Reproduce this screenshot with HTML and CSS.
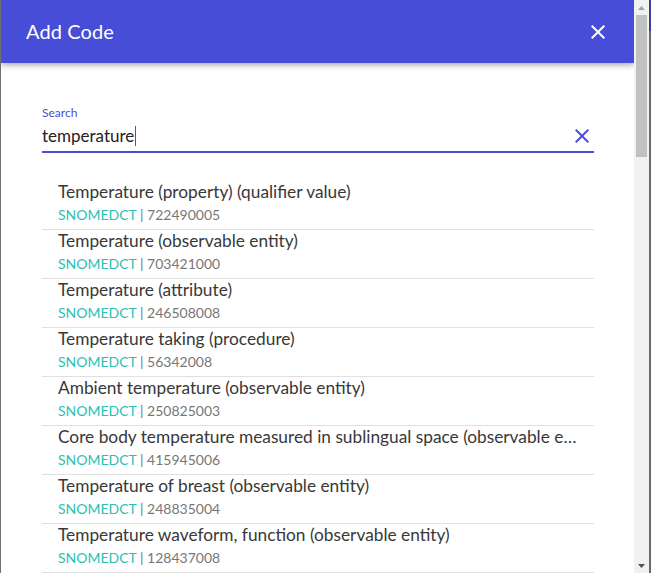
FILE: index.html
```html
<!DOCTYPE html>
<html>
<head>
<meta charset="utf-8">
<link rel="stylesheet" href="styles.css">
</head>
<body>
<div class="backdrop">
  <div class="dialog">
    <div class="dialog-main">
      <header class="dialog-header">
        <h1 class="dialog-title">Add Code</h1>
        <button class="icon-btn header-close" aria-label="Close">
          <svg width="24" height="24" viewBox="0 0 24 24"><path fill="currentColor" d="M19 6.41L17.59 5 12 10.590 6.41 5 5 6.41 10.59 12 5 17.59 6.41 19 12 13.41 17.59 19 19 17.59 13.41 12z"/></svg>
        </button>
      </header>
      <div class="dialog-body">
        <div class="field">
          <label class="field-label">Search</label>
          <div class="field-row">
            <span class="field-input">temperature<span class="caret"></span></span>
            <button class="icon-btn clear-btn" aria-label="Clear">
              <svg width="24" height="24" viewBox="0 0 24 24"><path fill="currentColor" d="M19 6.41L17.59 5 12 10.59 6.41 5 5 6.41 10.59 12 5 17.59 6.41 19 12 13.41 17.59 19 19 17.59 13.41 12z"/></svg>
            </button>
          </div>
        </div>
        <ul class="results">
          <li class="result"><div class="result-title">Temperature (property) (qualifier value)</div><div class="result-code"><span class="system">SNOMEDCT</span> | 722490005</div></li>
          <li class="result"><div class="result-title">Temperature (observable entity)</div><div class="result-code"><span class="system">SNOMEDCT</span> | 703421000</div></li>
          <li class="result"><div class="result-title">Temperature (attribute)</div><div class="result-code"><span class="system">SNOMEDCT</span> | 246508008</div></li>
          <li class="result"><div class="result-title">Temperature taking (procedure)</div><div class="result-code"><span class="system">SNOMEDCT</span> | 56342008</div></li>
          <li class="result"><div class="result-title">Ambient temperature (observable entity)</div><div class="result-code"><span class="system">SNOMEDCT</span> | 250825003</div></li>
          <li class="result"><div class="result-title">Core body temperature measured in sublingual space (observable entity)</div><div class="result-code"><span class="system">SNOMEDCT</span> | 415945006</div></li>
          <li class="result"><div class="result-title">Temperature of breast (observable entity)</div><div class="result-code"><span class="system">SNOMEDCT</span> | 248835004</div></li>
          <li class="result"><div class="result-title">Temperature waveform, function (observable entity)</div><div class="result-code"><span class="system">SNOMEDCT</span> | 128437008</div></li>
        </ul>
      </div>
    </div>
    <div class="scrollbar" aria-hidden="true">
      <div class="sb-button">
        <svg width="15" height="15" viewBox="0 0 15 15"><polygon points="4,10 11,10 7.5,6" fill="#a3a3a3"/></svg>
      </div>
      <div class="sb-track">
        <div class="sb-thumb"></div>
      </div>
      <div class="sb-button">
        <svg width="15" height="15" viewBox="0 0 15 15"><polygon points="4,6 11,6 7.5,10" fill="#505050"/></svg>
      </div>
    </div>
  </div>
</div>
</body>
</html>
```

FILE: styles.css
```css
* { box-sizing: border-box; }
html, body { margin: 0; padding: 0; }
body {
  font-family: Lato, "Liberation Sans", sans-serif;
  background: #6b6b6b;
  overflow: hidden;
}
.backdrop {
  height: 573px;
  padding: 0 2px 0 1px;
  background: linear-gradient(to bottom, #3a3e9a 0, #3a3e9a 31px, #6b6b6b 31px) right top / 2px 100% no-repeat, #707070;
}
.dialog {
  height: 573px;
  background: #ffffff;
  display: flex;
}
.dialog-main {
  flex: 1;
  min-width: 0;
  display: flex;
  flex-direction: column;
  overflow: hidden;
}
.dialog-header {
  position: relative;
  z-index: 1;
  flex: 0 0 63px;
  background: #474dd6;
  color: #ffffff;
  display: flex;
  align-items: center;
  justify-content: space-between;
  padding: 0 24px 2px 25px;
  box-shadow: 0 2px 6px rgba(0,0,0,0.35);
}
.dialog-title {
  margin: 0;
  font-size: 20px;
  font-weight: 400;
  letter-spacing: 0.1px;
}
.icon-btn {
  border: 0;
  background: transparent;
  padding: 0;
  width: 24px;
  height: 24px;
  display: flex;
  align-items: center;
  justify-content: center;
  cursor: pointer;
}
.header-close { color: #ffffff; margin-top: 2px; }
.dialog-body {
  padding: 43px 40px 0 41px;
}
.field {
  display: flex;
  flex-direction: column;
}
.field-label {
  font-size: 12px;
  line-height: 14px;
  color: #4a4fd6;
}
.field-row {
  margin-top: 4px;
  display: flex;
  align-items: center;
  justify-content: space-between;
  padding-bottom: 3px;
  border-bottom: 2px solid #474dd6;
}
.field-input {
  font-size: 17px;
  line-height: 24px;
  color: #222222;
  display: flex;
  align-items: center;
}
.caret {
  display: inline-block;
  width: 1px;
  height: 20px;
  background: #474dd6;
  margin-left: 1px;
}
.clear-btn { color: #474dd6; }
.results {
  list-style: none;
  margin: 28px 0 0;
  padding: 0;
}
.result {
  padding: 1px 16px 4px 16px;
  border-bottom: 1px solid #e0e0e0;
}
.result-title {
  font-size: 17.3px;
  line-height: 20px;
  color: #383838;
  white-space: nowrap;
  overflow: hidden;
  text-overflow: ellipsis;
}
.result-code {
  margin-top: 3px;
  font-size: 14px;
  line-height: 20px;
  color: #777777;
}
.system { color: #2bbfb3; }
.scrollbar {
  flex: 0 0 15px;
  background: #f1f1f1;
  display: flex;
  flex-direction: column;
}
.sb-button {
  flex: 0 0 15px;
  display: flex;
}
.sb-track {
  flex: 1;
  padding: 0 2px;
}
.sb-thumb {
  height: 142px;
  background: #c1c1c1;
}
```
